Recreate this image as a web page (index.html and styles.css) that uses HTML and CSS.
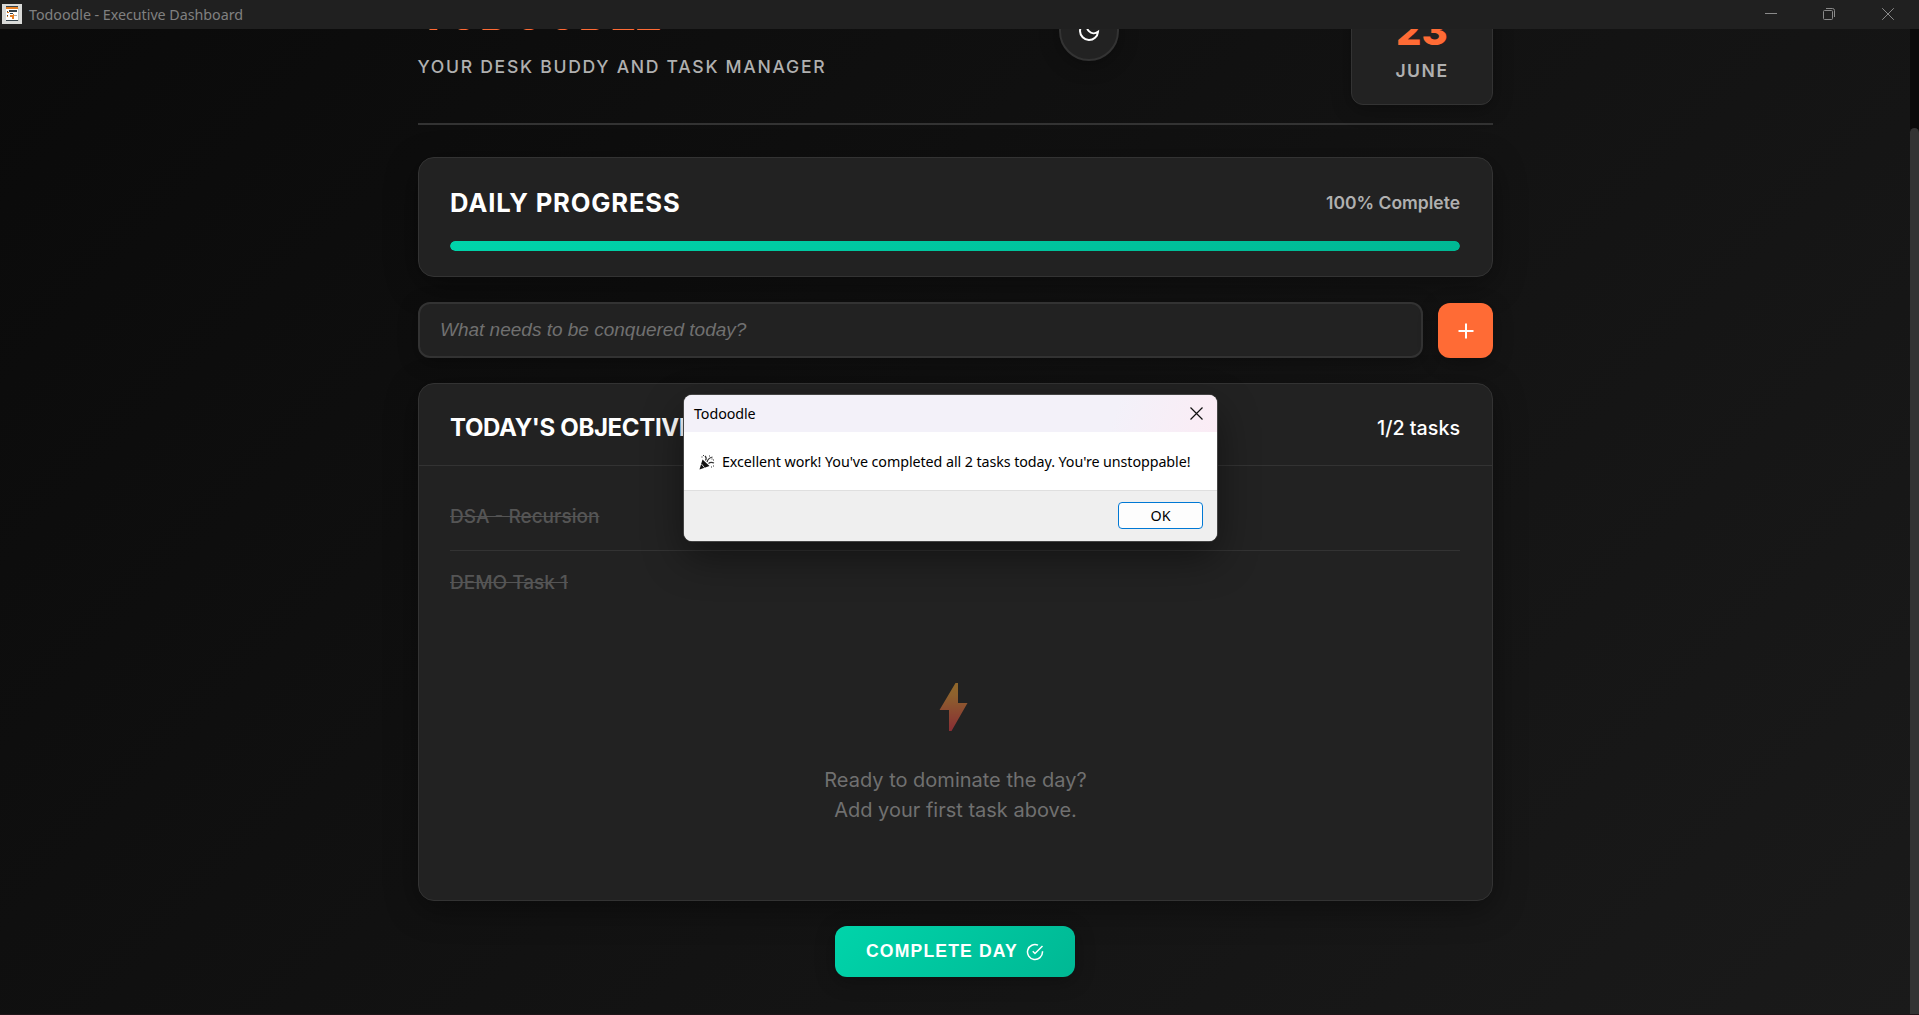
FILE: index.html
```html
<!DOCTYPE html>
<html lang="en">
<head>
<meta charset="utf-8">
<title>Todoodle - Executive Dashboard</title>
<link rel="stylesheet" href="styles.css">
</head>
<body>
<div class="titlebar">
  <svg class="app-icon" viewBox="0 0 20 20" shape-rendering="crispEdges">
    <rect width="20" height="20" fill="#d9dad8"/>
    <rect x="5" y="4" width="12" height="13" fill="#c3c6c4"/>
    <rect x="4" y="2" width="12" height="15" fill="#fff"/>
    <rect x="4" y="2" width="12" height="1" fill="#35424a"/>
    <rect x="4" y="3" width="12" height="2" fill="#e67e22"/>
    <path d="M7 6h8v2H7zM4 16h12v1H4zM8 9h3v1H8zM5 7h1v1H5zM5 11h1v1H5z" fill="#35424a"/>
    <path d="M5 8h2v1H5zM8 11h3v-1h1v5h-2v-2H8zM5 12h1v1H5z" fill="#e67e22"/>
    <path d="M12 11h3v1h-3z" fill="#aaa"/>
  </svg>
  <span class="window-title">Todoodle - Executive Dashboard</span>
  <div class="window-controls">
    <svg width="12" height="12" viewBox="0 0 12 12"><path d="M0 5.500h12"/></svg>
    <svg width="12" height="12" viewBox="0 0 12 12"><rect x=".5" y="2.500" width="9" height="9" rx="1"/><path d="M3 .5h6.500a2 2 0 0 1 2 2V9"/></svg>
    <svg width="12" height="12" viewBox="0 0 12 12"><path d="M.2.2l11.600 11.600M11.800.2L.2 11.800"/></svg>
  </div>
</div>
<div class="viewport">
  <main class="container">
    <header class="header">
      <div class="brand">
        <h1>TODOODLE</h1>
        <p>YOUR DESK BUDDY AND TASK MANAGER</p>
      </div>
      <button class="theme-toggle" aria-label="Toggle theme">
        <svg width="24" height="24" viewBox="0 0 24 24"><path d="M21 12.790A9 9 0 1 1 11.210 3 7 7 0 0 0 21 12.790z"/></svg>
      </button>
      <div class="date-card"><strong>23</strong><span>JUNE</span></div>
    </header>
    <section class="card progress">
      <div class="progress-head"><h2>DAILY PROGRESS</h2><span>100% Complete</span></div>
      <div class="track"><div class="fill" style="width:100%"></div></div>
    </section>
    <div class="entry">
      <input type="text" placeholder="What needs to be conquered today?">
      <button class="add" aria-label="Add task"><svg width="20" height="20" viewBox="0 0 24 24"><path d="M12 3v18M3 12h18"/></svg></button>
    </div>
    <section class="card tasks">
      <div class="tasks-head"><h2>TODAY'S OBJECTIVES</h2><span>1/2 tasks</span></div>
      <ul>
        <li><span>DSA - Recursion</span></li>
        <li><span>DEMO Task 1</span></li>
      </ul>
      <div class="empty">
        <svg width="64" height="64" viewBox="0 0 64 64">
          <defs><linearGradient id="bolt" x1="0" y1="0" x2="0" y2="1"><stop offset="0" stop-color="#ffac33"/><stop offset=".25" stop-color="#f9a13a"/><stop offset="1" stop-color="#f03a47"/></linearGradient></defs>
          <path fill="url(#bolt)" d="M31.500 8h2.500v20h9.500L27.500 56h-2.500V35H15.500z"/>
        </svg>
        <p>Ready to dominate the day?<br>Add your first task above.</p>
      </div>
    </section>
    <button class="complete">COMPLETE DAY
      <svg width="18" height="18" viewBox="0 0 24 24"><path d="M22 11.080V12a10 10 0 1 1-5.930-9.140"/><path d="M22 4L12 14.010l-3-3"/></svg>
    </button>
  </main>
  <div class="scrollbar"><div class="thumb"></div></div>
</div>
<div class="dialog" role="dialog">
  <div class="dialog-title"><span>Todoodle</span>
    <svg width="13" height="13" viewBox="0 0 13 13"><path d="M.5.5l12 12M12.500.5l-12 12"/></svg>
  </div>
  <div class="dialog-body">
    <svg width="16" height="16" viewBox="0 0 16 16">
      <path fill="#111" d="M.5 15.500L3.500 5.500 10.500 12z"/>
      <path fill="none" stroke="#fff" stroke-width=".8" d="M2.500 10l3 3.700"/>
      <path fill="none" stroke="#333" stroke-width="1.200" d="M6.500 6.500c1-1.500 1-3-.5-4.500M9.500 9.500c1.500-1.500 3.500-1.500 5.500-.5M8 8c1-3 3-4.500 5.500-5M2.500 3h1M10 2h1M14 6h1M12 13h1M12.500 5h1M14 12h1M4 1.500h1"/>
    </svg>
    <span>Excellent work! You've completed all 2 tasks today. You're unstoppable!</span>
  </div>
  <div class="dialog-foot"><button>OK</button></div>
</div>
</body>
</html>
```

FILE: styles.css
```css
* { box-sizing: border-box; margin: 0; padding: 0; }
body { height: 1015px; display: flex; flex-direction: column; overflow: hidden; background: #0a0a0a; color: #fff; font-family: Inter, "Liberation Sans", sans-serif; border-bottom: 1px solid #1f1418; }
button { font: inherit; border: 0; color: inherit; }
svg { flex: none; }
.titlebar { height: 29px; flex: none; position: relative; z-index: 2; display: flex; align-items: center; background: #202020; padding: 0 25px 1px 2px; }
.app-icon { width: 20px; height: 20px; }
.window-title { margin-left: 7px; color: #808080; font: 14.300px "Noto Sans", sans-serif; letter-spacing: -.04px; }
.window-controls { margin-left: auto; display: flex; gap: 47px; }
.window-controls svg { fill: none; stroke: #8a8a8a; }
.window-controls svg:first-child { margin-right: -1px; }
.viewport { flex: 1; min-height: 0; display: flex; align-items: flex-end; overflow: hidden; background: linear-gradient(135deg, #0a0a0a 0%, #1a1a1a 100%); }
.container { width: 1075px; margin: 0 417px 37px 418px; flex: none; display: flex; flex-direction: column; }
.header { height: 148px; display: flex; justify-content: space-between; align-items: center; border-bottom: 2px solid #333; margin-bottom: 32px; padding-bottom: 18px; }
.brand { width: 408px; padding-bottom: 14px; }
.brand h1 { font-size: 44.800px; line-height: 53px; font-weight: 800; letter-spacing: -.9px; color: #ff6b35; }
.brand p { margin-top: 12px; font-size: 17.600px; line-height: 28px; font-weight: 500; letter-spacing: 1.700px; color: #b0b0b0; white-space: nowrap; margin-left: -.5px; }
.theme-toggle { width: 60px; height: 60px; margin-bottom: 20px; border-radius: 50%; border: 2px solid #333; background: #222; display: flex; align-items: center; justify-content: center; box-shadow: 0 4px 20px rgba(0,0,0,.3); }
.theme-toggle svg { fill: none; stroke: #fff; stroke-width: 2; }
.date-card { width: 142px; height: 128px; border: 1px solid #333; border-radius: 12px; background: #222; text-align: center; box-shadow: 0 4px 20px rgba(0,0,0,.3); }
.date-card strong { display: block; font-size: 40px; font-weight: 800; line-height: 40px; color: #ff6b35; padding-top: 33px; }
.date-card span { display: block; font-size: 17.600px; font-weight: 600; letter-spacing: 1.500px; color: #b0b0b0; line-height: 28px; margin-top: 6px; }
.card { background: #222; border: 1px solid #333; border-radius: 16px; box-shadow: 0 8px 32px rgba(0,0,0,.4); }
.progress { height: 120px; padding: 24px 32px 24px 31px; }
.progress-head { display: flex; justify-content: space-between; align-items: center; height: 41px; }
.progress-head h2 { font-size: 25.600px; font-weight: 700; letter-spacing: .83px; }
.progress-head span { font-size: 17.500px; font-weight: 600; color: #b0b0b0; }
.track { height: 10px; margin-top: 18px; border-radius: 5px; background: #1a1a1a; overflow: hidden; }
.fill { height: 10px; border-radius: 5px; background: linear-gradient(135deg, #00d4aa, #00b894); }
.entry { display: flex; gap: 15px; margin: 25px 0; align-items: flex-end; }
.entry input { flex: 1; height: 56px; border: 2px solid #333; border-radius: 12px; background: #222; padding: 0 20px; font: 19px "Liberation Sans", Arial, sans-serif; box-shadow: 0 4px 20px rgba(0,0,0,.3); }
.entry input::placeholder { color: #707070; font-style: italic; }
.add { width: 55px; height: 55px; border-radius: 12px; background: #ff6b35; display: flex; align-items: center; justify-content: center; box-shadow: 0 4px 20px rgba(0,0,0,.3); }
.add svg { fill: none; stroke: #fff; stroke-width: 2.400; }
.tasks { height: 518px; }
.tasks-head { height: 82px; padding: 6px 32px 0 31px; display: flex; justify-content: space-between; align-items: center; border-bottom: 1px solid #333; }
.tasks-head h2 { font-size: 24px; font-weight: 700; letter-spacing: -.36px; }
.tasks-head span { font-size: 19.700px; font-weight: 500; }
.tasks ul { list-style: none; padding: 18px 32px 0 31px; }
.tasks li { height: 66px; padding-bottom: 2px; display: flex; align-items: center; font-size: 19.050px; font-weight: 500; color: #555; text-decoration: line-through; }
.tasks li + li { height: 63px; padding-bottom: 0; border-top: 1px solid #333; }
.empty { margin-top: 62px; text-align: center; color: #707070; font-size: 20px; line-height: 30px; }
.empty svg { display: block; margin: 0 auto 26px; opacity: .5; }
.complete { align-self: center; width: 240px; height: 51px; margin: 25px 1px 0 0; border-radius: 12px; background: linear-gradient(135deg, #00d4aa, #00b894); display: flex; align-items: center; justify-content: center; gap: 8px; font: bold 17.600px "Liberation Sans", Arial, sans-serif; letter-spacing: 1.150px; box-shadow: 0 4px 20px rgba(0,0,0,.3); }
.complete svg { fill: none; stroke: #fff; stroke-width: 2; }
.scrollbar { width: 9px; align-self: stretch; background: #0a0a0a; padding-top: 99px; }
.thumb { height: 100%; background: #333; border-radius: 5px 5px 0 0; }
.dialog { position: absolute; z-index: 3; left: 684px; top: 395px; width: 533px; height: 146px; border-radius: 8px; background: #fff; color: #000; overflow: hidden; font: 14.300px "Noto Sans", sans-serif; letter-spacing: -.08px; box-shadow: 0 0 0 1px #444, 0 16px 40px rgba(0,0,0,.45); }
.dialog-title { height: 37px; padding: 0 14px 0 10px; display: flex; align-items: center; justify-content: space-between; background: linear-gradient(110deg, #f3f1f9 80%, #fbecf5 100%); }
.dialog-title svg { fill: none; stroke: #111; stroke-width: 1.200; }
.dialog-body { height: 58px; padding: 1px 15px 0; display: flex; align-items: center; gap: 7px; white-space: nowrap; }
.dialog-foot { height: 51px; padding: 11px 14px; border-top: 1px solid #dfdfdf; background: #efefef; display: flex; justify-content: flex-end; }
.dialog-foot button { width: 85px; height: 27px; border: 1px solid #0078d4; border-radius: 4px; background: #fdfdfd; }
```
